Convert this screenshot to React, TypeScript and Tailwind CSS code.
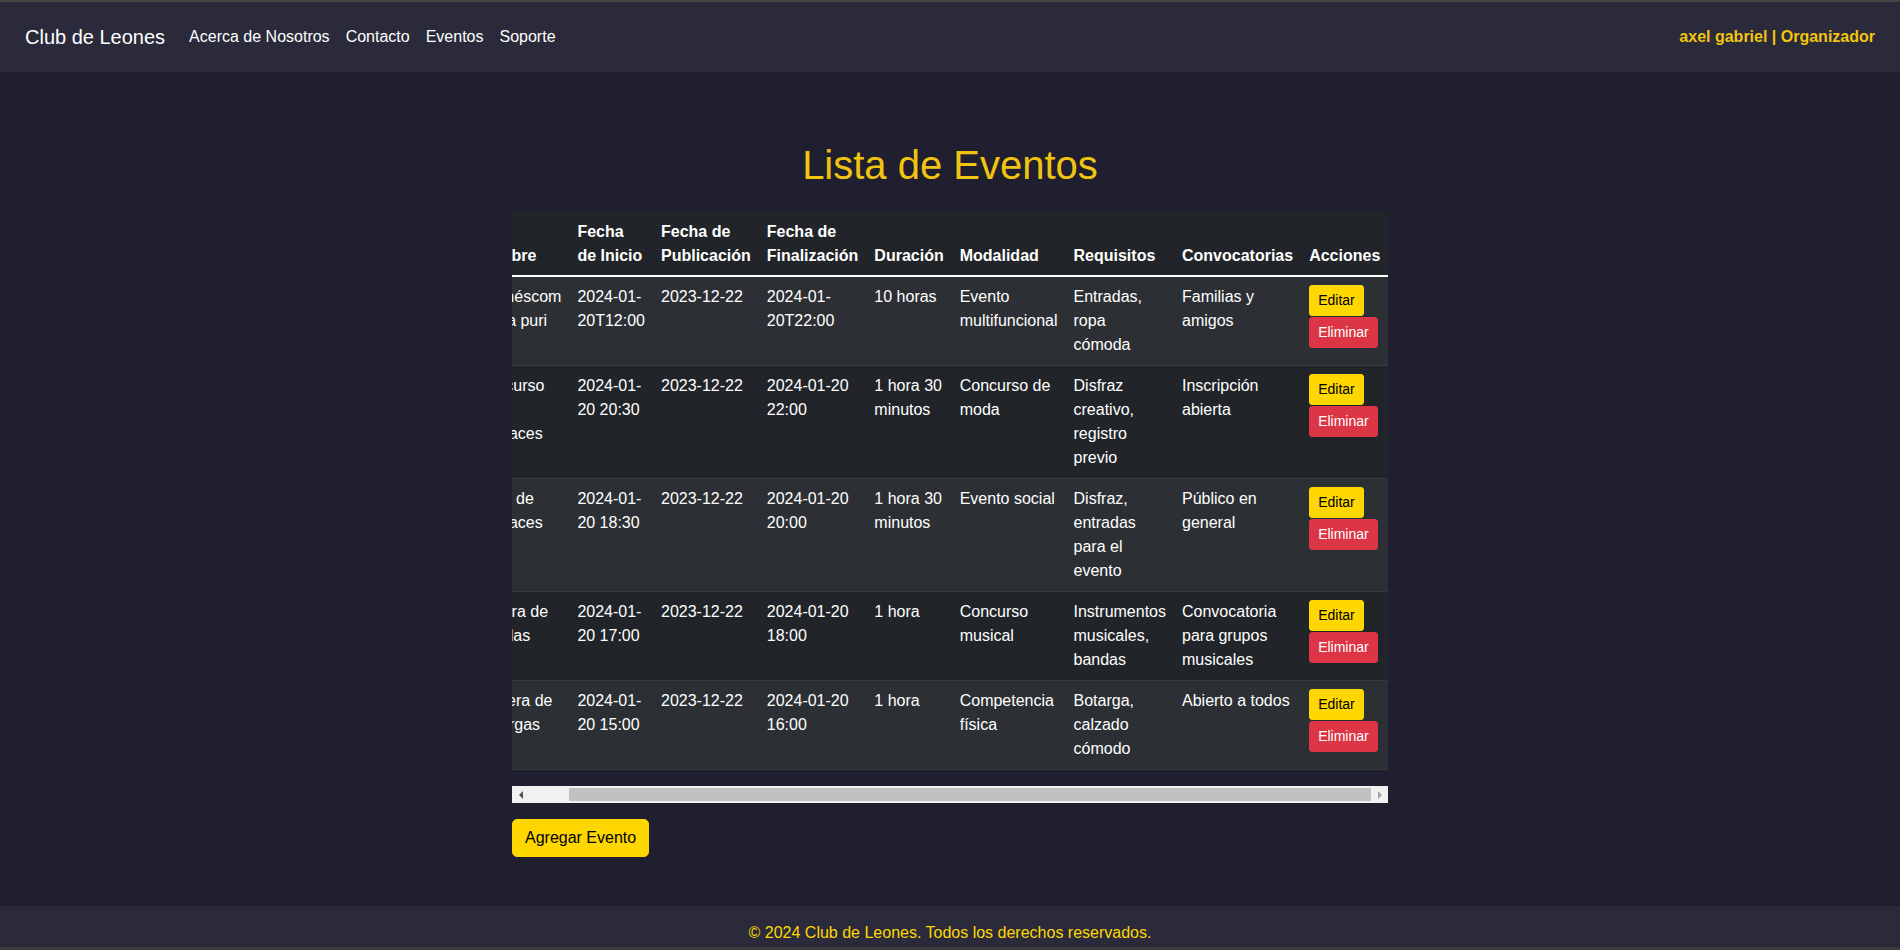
import React, { useLayoutEffect, useRef, useState } from 'react';

type Evento = {
  nombre: string;
  inicio: string;
  publicacion: string;
  fin: string;
  duracion: string;
  modalidad: string;
  requisitos: string;
  convocatorias: string;
};

const eventos: Evento[] = [
  {
    nombre: 'Duanéscom por la puri',
    inicio: '2024-01-20T12:00',
    publicacion: '2023-12-22',
    fin: '2024-01-20T22:00',
    duracion: '10 horas',
    modalidad: 'Evento multifuncional',
    requisitos: 'Entradas, ropa cómoda',
    convocatorias: 'Familias y amigos',
  },
  {
    nombre: 'Concurso de Disfraces',
    inicio: '2024-01-20 20:30',
    publicacion: '2023-12-22',
    fin: '2024-01-20 22:00',
    duracion: '1 hora 30 minutos',
    modalidad: 'Concurso de moda',
    requisitos: 'Disfraz creativo, registro previo',
    convocatorias: 'Inscripción abierta',
  },
  {
    nombre: 'Baile de Disfraces',
    inicio: '2024-01-20 18:30',
    publicacion: '2023-12-22',
    fin: '2024-01-20 20:00',
    duracion: '1 hora 30 minutos',
    modalidad: 'Evento social',
    requisitos: 'Disfraz, entradas para el evento',
    convocatorias: 'Público en general',
  },
  {
    nombre: 'Guerra de Bandas',
    inicio: '2024-01-20 17:00',
    publicacion: '2023-12-22',
    fin: '2024-01-20 18:00',
    duracion: '1 hora',
    modalidad: 'Concurso musical',
    requisitos: 'Instrumentos musicales, bandas',
    convocatorias: 'Convocatoria para grupos musicales',
  },
  {
    nombre: 'Carrera de Botargas',
    inicio: '2024-01-20 15:00',
    publicacion: '2023-12-22',
    fin: '2024-01-20 16:00',
    duracion: '1 hora',
    modalidad: 'Competencia física',
    requisitos: 'Botarga, calzado cómodo',
    convocatorias: 'Abierto a todos',
  },
];

const headers = [
  'Nombre',
  'Fecha de Inicio',
  'Fecha de Publicación',
  'Fecha de Finalización',
  'Duración',
  'Modalidad',
  'Requisitos',
  'Convocatorias',
  'Acciones',
];

const ARROW = 17;

const App: React.FC = () => {
  const scrollRef = useRef<HTMLDivElement>(null);
  const [thumb, setThumb] = useState({ left: 0, width: 0 });

  // the list is shown scrolled all the way to the right
  useLayoutEffect(() => {
    const el = scrollRef.current;
    if (!el) return;
    const max = el.scrollWidth - el.clientWidth;
    el.scrollLeft = max;
    const track = el.clientWidth - ARROW * 2;
    const width = (track * el.clientWidth) / el.scrollWidth;
    const left = max > 0 ? ((track - width) * el.scrollLeft) / max : 0;
    setThumb({ left, width });
  }, []);

  return (
    <div className="min-h-screen flex flex-col bg-[#1f1f2f] font-['Liberation_Sans',Arial,sans-serif] text-white">
      <nav className="h-[72px] border-t-2 border-[#464646] bg-[#2a2a3b] flex items-center justify-between px-[25px]">
        <div className="flex items-center">
          <span className="text-[20px] leading-[30px] text-white mr-4">Club de Leones</span>
          <div className="flex items-center text-base leading-6">
            <a href="#" className="px-2 text-white">Acerca de Nosotros</a>
            <a href="#" className="px-2 text-white">Contacto</a>
            <a href="#" className="px-2 text-white">Eventos</a>
            <a href="#" className="px-2 text-white">Soporte</a>
          </div>
        </div>
        <span className="text-base font-bold text-[#f1c40f]">axel gabriel | Organizador</span>
      </nav>

      <main className="flex-1 pt-[69px]">
        <h1 className="text-center text-[40px] leading-[48px] text-[#f1c40f] mb-[23px]">Lista de Eventos</h1>

        <div className="w-[876px] mx-auto">
          <div ref={scrollRef} className="overflow-hidden">
            <table className="w-full border-collapse text-base leading-6 text-white">
              <thead>
                <tr className="bg-[#212529]">
                  {headers.map((h) => (
                    <th key={h} className="px-2 pt-2 pb-[7px] text-left font-bold align-bottom border-b-2 border-white">
                      {h}
                    </th>
                  ))}
                </tr>
              </thead>
              <tbody>
                {eventos.map((ev, i) => (
                  <tr key={ev.nombre} className={i % 2 === 0 ? 'bg-[#2c3034]' : 'bg-[#212529]'}>
                    <td className="px-2 py-2 align-top border-b border-[#373b3e]">{ev.nombre}</td>
                    <td className="px-2 py-2 align-top border-b border-[#373b3e]">{ev.inicio}</td>
                    <td className="px-2 py-2 align-top border-b border-[#373b3e]">{ev.publicacion}</td>
                    <td className="px-2 py-2 align-top border-b border-[#373b3e]">{ev.fin}</td>
                    <td className="px-2 py-2 align-top border-b border-[#373b3e]">{ev.duracion}</td>
                    <td className="px-2 py-2 align-top border-b border-[#373b3e]">{ev.modalidad}</td>
                    <td className="px-2 py-2 align-top border-b border-[#373b3e]">{ev.requisitos}</td>
                    <td className="px-2 py-2 align-top border-b border-[#373b3e]">{ev.convocatorias}</td>
                    <td className="px-2 py-2 align-top border-b border-[#373b3e]">
                      <div className="flex flex-col items-start gap-px">
                        <button className="px-2 py-1 text-sm leading-[21px] rounded-[3px] border border-[#ffd700] bg-[#ffd700] text-black">
                          Editar
                        </button>
                        <button className="px-2 py-1 text-sm leading-[21px] rounded-[3px] border border-[#dc3545] bg-[#dc3545] text-white">
                          Eliminar
                        </button>
                      </div>
                    </td>
                  </tr>
                ))}
              </tbody>
            </table>
          </div>

          <div className="mt-4 h-[17px] flex bg-[#f1f1f1]">
            <div className="w-[17px] flex items-center justify-center">
              <div className="w-0 h-0 border-y-[4px] border-y-transparent border-r-[4px] border-r-[#505050]" />
            </div>
            <div className="flex-1 py-[2px]">
              <div className="h-full bg-[#c1c1c1]" style={{ marginLeft: thumb.left, width: thumb.width }} />
            </div>
            <div className="w-[17px] flex items-center justify-center">
              <div className="w-0 h-0 border-y-[4px] border-y-transparent border-l-[4px] border-l-[#a3a3a3]" />
            </div>
          </div>

          <button className="mt-4 px-3 py-1.5 text-base leading-6 rounded-[5px] border border-[#ffd700] bg-[#ffd700] text-black">
            Agregar Evento
          </button>
        </div>
      </main>

      <footer className="h-[44px] pt-[15px] bg-[#2a2a3b] text-center text-base leading-6 text-[#ffd700] border-b-[3px] border-[#3b3b3b]">
        © 2024 Club de Leones. Todos los derechos reservados.
      </footer>
    </div>
  );
};

export default App;
